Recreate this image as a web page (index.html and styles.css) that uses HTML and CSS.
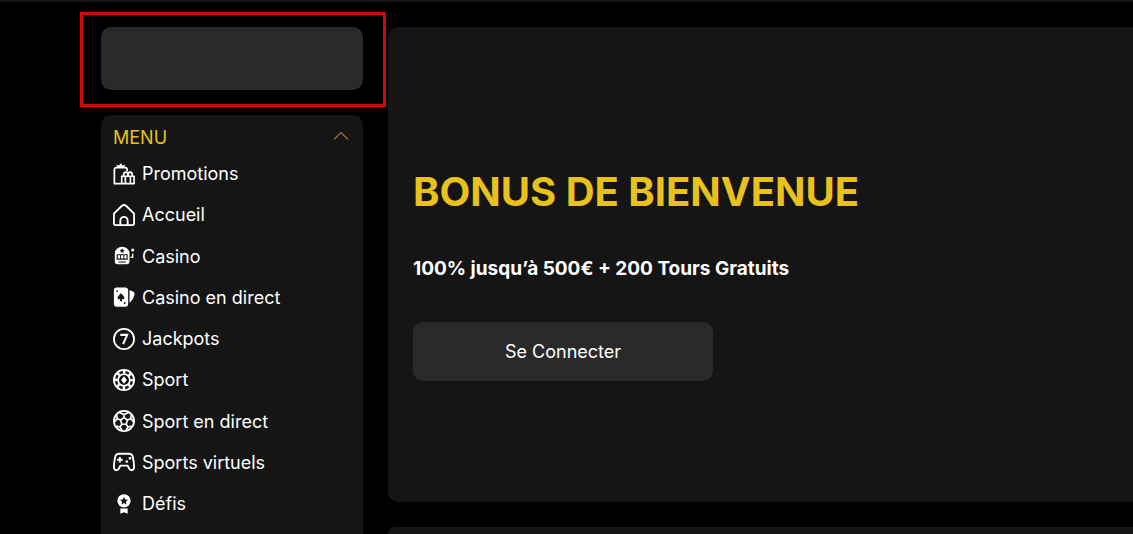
FILE: index.html
```html
<!DOCTYPE html>
<html lang="fr">
<head>
    <meta charset="UTF-8">
    <meta name="viewport" content="width=device-width, initial-scale=1.0">
    <title>Bonus de bienvenue</title>
    <link rel="stylesheet" href="styles.css">
</head>
<body>

    <div class="layout">
        <!-- Left column -->
        <aside class="sidebar">
            <div class="logo-box">
                <div class="highlight"></div>
            </div>

            <nav class="menu">
                <button class="menu-toggle" type="button" aria-expanded="true">
                    MENU
                    <svg class="chevron" viewBox="0 0 16 10"><path d="M1 8.500 8 1.500l7 7"/></svg>
                </button>
                <ul class="menu-list">
                    <li><a href="#">
                        <svg class="icon" viewBox="0 0 24 24">
                            <path d="M9 22.500H1.500V7.500q0-2.500 2.500-2.500h9q2.500 0 2.500 2.500V9" stroke-width="1.900"/>
                            <path class="fill" d="M5 5 3.500 2l3 .8L8.500.300l2 2.500 3-.8L12 5z"/>
                            <path d="M9.500 14.500H23v8H9.500zM13.500 14.500v8M19 14.500v8M11.500 14q0-4 2.500-4 2.300 0 2.300 4 0-4 2.300-4 2.500 0 2.500 4" stroke-width="1.800"/>
                        </svg>
                        Promotions</a></li>
                    <li><a href="#">
                        <svg class="icon" viewBox="0 0 24 24">
                            <path d="M1 10.500 9.500 2.200q2.500-2.400 5 0L23 10.500V21q0 2-2 2H3q-2 0-2-2zM8 23v-5a4 4 0 0 1 8 0v5"/>
                        </svg>
                        Accueil</a></li>
                    <li><a href="#">
                        <svg class="icon" viewBox="0 0 24 24">
                            <path class="fill" d="M2 9a8 7 0 0 1 16 0v9q0 3-3 3H5q-3 0-3-3z"/>
                            <path class="dark" d="M10 3.500l.8 1.700 1.900.2-1.400 1.300.4 1.900-1.700-.9-1.700.9.4-1.900-1.400-1.300 1.900-.2zM4 10h12v6H4zM6 18h8v1.200H6z"/>
                            <path class="fill" d="M5.300 11.200h2.500v3.600H5.300zM8.800 11.200h2.500v3.600H8.800zM12.300 11.200h2.500v3.600h-2.500z"/>
                            <path d="M19 13.500h2.500V9.500" stroke-width="1.500"/>
                            <circle class="fill" cx="21.500" cy="5.500" r="1.700"/>
                        </svg>
                        Casino</a></li>
                    <li><a href="#">
                        <svg class="icon" viewBox="0 0 24 24">
                            <rect class="fill" x="1" y="1.500" width="15.500" height="21" rx="3"/>
                            <path class="fill" d="M18 4.500q6 1 5.500 5-1 5-5.500 9z"/>
                            <path class="dark" d="M8.700 7.500c1 2 3.700 3 3.700 5.200 0 1.700-2 2.300-2.900 1l.7 2.800h-3l.7-2.800C7 15 5 14.400 5 12.700c0-2.200 2.700-3.200 3.700-5.200z"/>
                            <circle class="dark" cx="4.500" cy="5.500" r="1"/>
                            <circle class="dark" cx="12.800" cy="18.500" r="1"/>
                        </svg>
                        Casino en direct</a></li>
                    <li><a href="#">
                        <svg class="icon" viewBox="0 0 24 24">
                            <circle cx="12" cy="12" r="11"/>
                            <path d="M8 7.500h7.500L11 17.500" stroke-width="2.200" stroke-linejoin="miter"/>
                        </svg>
                        Jackpots</a></li>
                    <li><a href="#">
                        <svg class="icon" viewBox="0 0 24 24">
                            <circle cx="12" cy="12" r="11"/>
                            <circle cx="12" cy="12" r="6.500"/>
                            <circle cx="12" cy="12" r="8.800" stroke-width="3.500" stroke-dasharray="2.800 4.112" stroke-dashoffset="1.400"/>
                            <path class="fill" d="M12 8 15.200 12 12 16 8.800 12z"/>
                        </svg>
                        Sport</a></li>
                    <li><a href="#">
                        <svg class="icon" viewBox="0 0 24 24">
                            <circle cx="12" cy="12" r="11"/>
                            <path d="M12 8.200 15.800 11l-1.500 4.500H9.700L8.200 11zM12 8.200V5L6.800 2.700M12 5l5.200-2.300M15.800 11l3.600-1.500.6-5M19.400 9.500l3.200 3.500M8.200 11 4.600 9.500l-.6-5M4.600 9.500 1.400 13M14.300 15.500l2.200 3L14 22.200M16.500 18.500l4.500-1M9.700 15.500l-2.200 3 2.500 3.700M7.500 18.500 3 17.500" stroke-width="1.800"/>
                        </svg>
                        Sport en direct</a></li>
                    <li><a href="#">
                        <svg class="icon" viewBox="0 0 24 24">
                            <path d="M6.500 3h11q3 0 4 3 1.500 6 1.500 11.500 0 3.500-2.700 3.500-1.900 0-2.800-2l-1.500-3H8l-1.500 3q-.9 2-2.800 2Q1 21 1 17.500 1 12 2.500 6q1-3 4-3z"/>
                            <path d="M7.500 6.500v6M4.500 9.500h6"/>
                            <circle class="fill" cx="18.500" cy="8" r="1.500"/>
                            <circle class="fill" cx="15" cy="11.500" r="1.500"/>
                        </svg>
                        Sports virtuels</a></li>
                    <li><a href="#">
                        <svg class="icon" viewBox="0 0 24 24">
                            <circle class="fill" cx="12" cy="8.500" r="7.200"/>
                            <path class="dark" d="M12 4.200l1.300 2.800 3 .4-2.200 2.100.6 3-2.700-1.500-2.700 1.500.6-3-2.200-2.100 3-.4z"/>
                            <path class="fill" d="M8 17h8v5.500l-4-1.500-4 1.500z"/>
                        </svg>
                        Défis</a></li>
                </ul>
            </nav>
        </aside>

        <!-- Main content -->
        <main class="content">
            <section class="banner">
                <h1>BONUS DE BIENVENUE</h1>
                <p>100% jusqu’à 500€ + 200 Tours Gratuits</p>
                <button class="connect" type="button">Se Connecter</button>
            </section>
            <section class="next-panel"></section>
        </main>
    </div>

</body>
</html>
```
FILE: styles.css
```css
* {
    box-sizing: border-box;
}

body {
    margin: 0;
    font-family: Inter, sans-serif;
    font-size: 18px;
    background-color: #000;
    color: #fff;
}

button {
    border: 0;
    font: inherit;
    cursor: pointer;
}

.layout {
    display: flex;
    gap: 25px;
    height: 100vh;
    padding: 25px 0 0 101px;
    border-top: 2px solid #151515;
    overflow: hidden;
}

.sidebar {
    display: flex;
    flex-direction: column;
    flex: 0 0 262px;
    gap: 25px;
}

.logo-box {
    position: relative;
    flex: 0 0 63px;
    background-color: #2a2a2a;
    border-radius: 10px;
}

/* Red frame drawn over the logo area */
.highlight {
    position: absolute;
    inset: -15px -23px -17px -21px;
    border: 3px solid #d00808;
}

.menu {
    flex: 1;
    padding: 10px 12px 0;
    background-color: #151515;
    border-radius: 10px 10px 0 0;
}

.menu-toggle {
    display: flex;
    justify-content: space-between;
    align-items: center;
    width: 100%;
    height: 25px;
    padding: 0 2px 0 0;
    background: none;
    color: #e9c11d;
}

.chevron {
    width: 16px;
    height: 10px;
    margin-bottom: 3px;
    fill: none;
    stroke: #e9c11d;
    stroke-width: 1;
}

.menu-list {
    display: flex;
    flex-direction: column;
    justify-content: space-between;
    height: 374px;
    list-style: none;
    margin: 0;
    padding: 3px 0 0;
}

.menu-list a {
    display: flex;
    align-items: center;
    gap: 7px;
    height: 41px;
    color: #fff;
    text-decoration: none;
}

.icon {
    width: 22px;
    height: 22px;
    fill: none;
    stroke: #fff;
    stroke-width: 2;
    stroke-linejoin: round;
}

.icon .fill {
    fill: #fff;
    stroke: none;
}

.icon .dark {
    fill: #151515;
    stroke: none;
}

.content {
    display: flex;
    flex-direction: column;
    flex: 1;
    gap: 25px;
}

.banner {
    display: flex;
    flex-direction: column;
    justify-content: center;
    align-items: flex-start;
    flex: 0 0 475px;
    padding: 18px 25px 0;
    background-color: #151515;
    border-radius: 10px 0 0 10px;
}

.banner h1 {
    margin: 0 0 38px;
    font-size: 40px;
    line-height: 50px;
    color: #e9c11d;
}

.banner p {
    margin: 0 0 40px;
    font-size: 19px;
    font-weight: bold;
    line-height: 27px;
}

.connect {
    width: 300px;
    height: 59px;
    background-color: #2a2a2a;
    border-radius: 10px;
    color: #fff;
}

.next-panel {
    flex: 1;
    background-color: #151515;
    border-radius: 10px 0 0 0;
}
```
